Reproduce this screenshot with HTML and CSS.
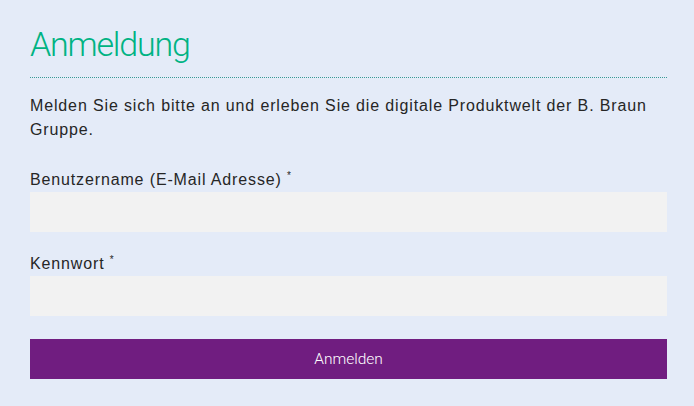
FILE: index.html
```html
<!DOCTYPE html>
<html lang="de">
<head>
<meta charset="utf-8">
<title>Anmeldung</title>
<link rel="stylesheet" href="styles.css">
</head>
<body>
<div class="page">
  <h1 class="title">Anmeldung</h1>
  <p class="intro">Melden Sie sich bitte an und erleben Sie die digitale Produktwelt der B. Braun Gruppe.</p>
  <form class="form">
    <div class="field">
      <label class="label" for="user">Benutzername (E-Mail Adresse) <sup class="req">*</sup></label>
      <input class="input" id="user" type="text">
    </div>
    <div class="field">
      <label class="label" for="pw">Kennwort <sup class="req">*</sup></label>
      <input class="input" id="pw" type="password">
    </div>
    <button class="button" type="button">Anmelden</button>
  </form>
</div>
</body>
</html>
```
FILE: styles.css
```css
html, body {
  margin: 0;
  padding: 0;
  background: #e4ebf8;
}
.page {
  padding: 22px 27px 0 30px;
  font-family: "Liberation Sans", Arial, sans-serif;
  color: #262626;
}
.title {
  margin: 0;
  font-family: Roboto, sans-serif;
  font-weight: 300;
  font-size: 34px;
  line-height: 44px;
  letter-spacing: -1.2px;
  color: #00b383;
  padding-bottom: 11px;
  border-bottom: 1px dotted #3a9a96;
}
.intro {
  margin: 16px 0 0 0;
  font-size: 16px;
  line-height: 24px;
  letter-spacing: 0.86px;
}
.form {
  margin-top: 28px;
}
.field {
  margin-bottom: 22px;
}
.label {
  display: block;
  font-size: 16px;
  line-height: 20px;
  letter-spacing: 0.86px;
}
.req {
  font-size: 10px;
  vertical-align: 6px;
  line-height: 0;
  letter-spacing: 0;
}
.input {
  display: block;
  box-sizing: border-box;
  width: 100%;
  height: 40px;
  margin-top: 2px;
  border: none;
  background: #f2f2f2;
  padding: 0 10px;
  outline: none;
}
.field + .button {
  margin-top: 1px;
}
.form .field:nth-of-type(2) {
  margin-bottom: 23px;
}
.button {
  display: block;
  width: 100%;
  height: 40px;
  border: none;
  background: #701d80;
  color: #ffffff;
  font-family: Roboto, sans-serif;
  font-weight: 300;
  font-size: 15.5px;
  padding: 0;
}
```
